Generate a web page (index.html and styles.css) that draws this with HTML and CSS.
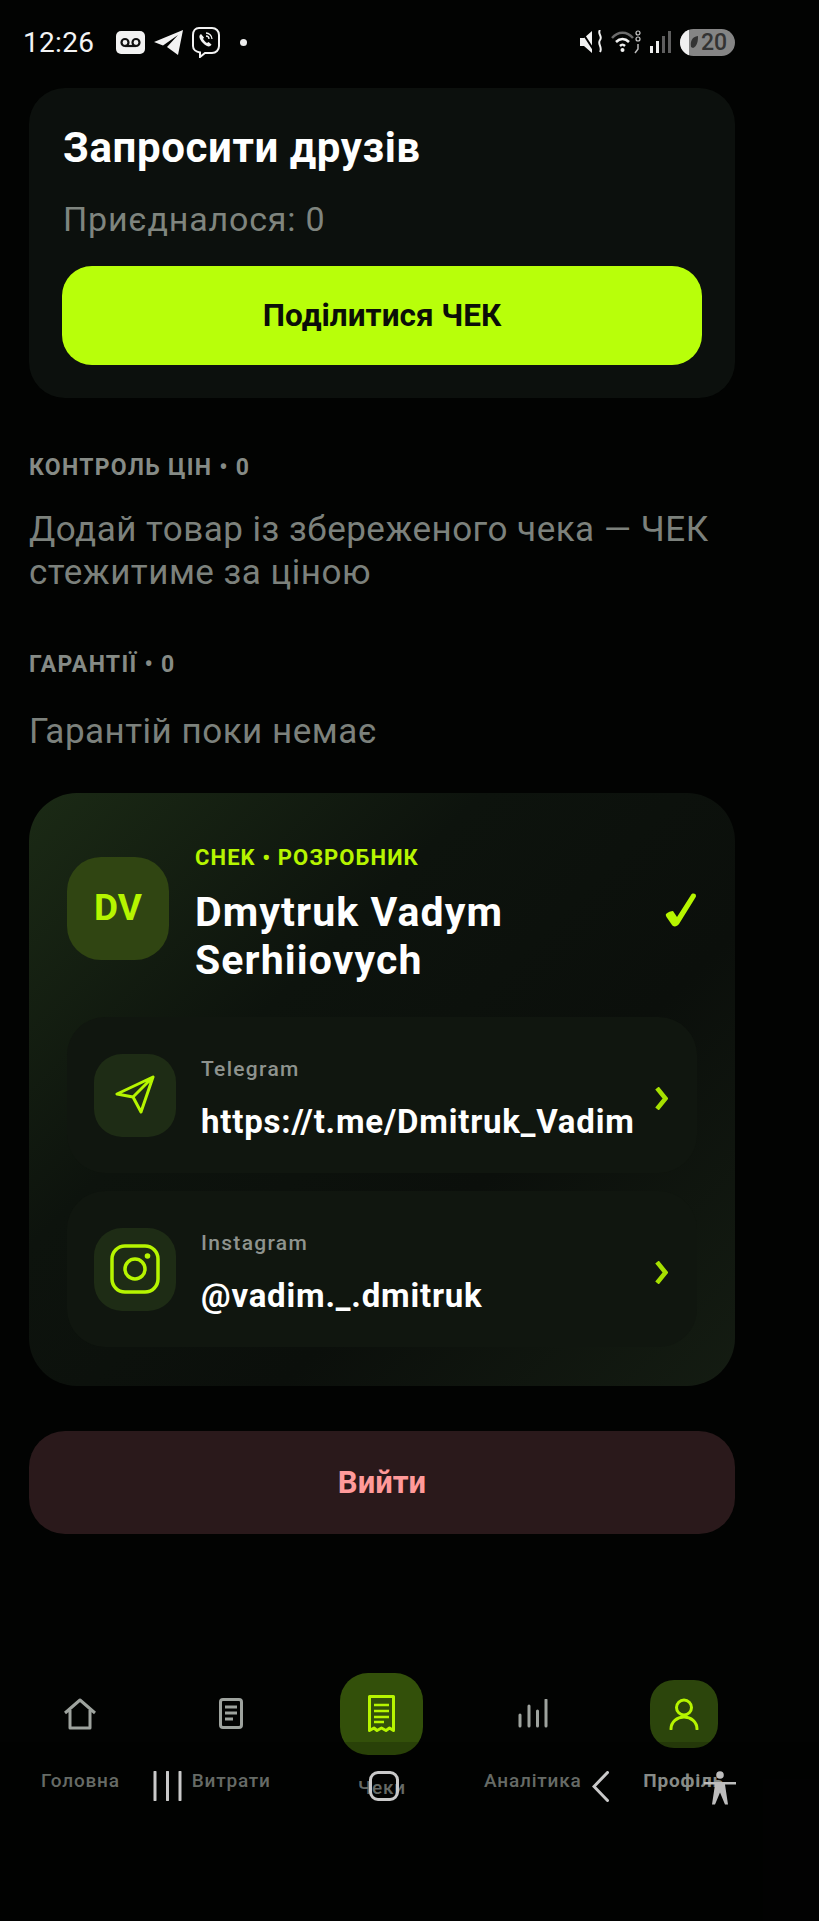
FILE: index.html
```html
<!DOCTYPE html>
<html lang="uk">
<head>
    <meta charset="UTF-8">
    <meta name="viewport" content="width=device-width, initial-scale=1.0">
    <title>Профіль</title>
    <link rel="stylesheet" href="styles.css">
</head>
<body>
    <header class="status-bar">
        <span class="clock">12:26</span>
        <svg class="st-voicemail" width="29" height="23" viewBox="0 0 29 23"><rect width="29" height="23" rx="5" fill="#f2f2f2"/><circle cx="9" cy="11.500" r="3.500" fill="none" stroke="#111" stroke-width="2.200"/><circle cx="20" cy="11.500" r="3.500" fill="none" stroke="#111" stroke-width="2.200"/><path d="M9 15h11" stroke="#111" stroke-width="2.200"/></svg>
        <svg class="st-telegram" width="29" height="25" viewBox="0 0 29 25"><path d="M29 0 0 12l9 3.500L24 5 13 17l11 8z" fill="#f2f2f2"/></svg>
        <svg class="st-viber" width="30" height="32" viewBox="0 0 30 32"><path d="M8 2h13c4 0 7 3 7 7v11c0 4-3 7-7 7h-7l-5 4v-4.500C5 26 2 23.500 2 20V9c0-4 2.500-7 6-7z" fill="none" stroke="#f2f2f2" stroke-width="2"/><path d="M10 8c-2 1-2 3-1 5 1.500 3 4 5.500 7 7 2 1 4 0 4.500-1.500l-3-2.500-1.500 1c-1.500-1-3-2.500-4-4l1-1.500z" fill="#f2f2f2"/><path d="M15 7c3 0 6 2.500 6 6M15 10c1.500 0 3 1.200 3 3" fill="none" stroke="#f2f2f2" stroke-width="1.300"/></svg>
        <span class="st-dot"></span>
        <span class="st-spacer"></span>
        <svg class="st-mute" width="25" height="24" viewBox="0 0 25 24"><path d="M0 8h4l8-7v22l-8-7H0z" fill="#f2f2f2"/><path d="M2 2l13 20" stroke="#000" stroke-width="2"/><path d="M20 0c-3 4 3 6 0 10s3 7 0 12" fill="none" stroke="#f2f2f2" stroke-width="2"/></svg>
        <svg class="st-wifi" width="32" height="26" viewBox="0 0 32 26"><path d="M1 9c6-7 15-7 21 0" fill="none" stroke="#6b6b6b" stroke-width="2.500"/><path d="M5 13c4-4 9-4 13 0M9 17c2-2 3-2 5 0" fill="none" stroke="#f2f2f2" stroke-width="2.500"/><circle cx="11.500" cy="21" r="2" fill="#f2f2f2"/><circle cx="27" cy="4" r="2" fill="none" stroke="#ccc" stroke-width="1.200"/><circle cx="27" cy="10" r="2" fill="none" stroke="#ccc" stroke-width="1.200"/><path d="M27 15v5l-3 4" fill="none" stroke="#bbb" stroke-width="1.500"/></svg>
        <svg class="st-signal" width="21" height="22" viewBox="0 0 21 22"><rect x="0" y="15" width="3" height="7" fill="#eee"/><rect x="6" y="10" width="3" height="12" fill="#eee"/><rect x="12" y="5" width="3" height="17" fill="#5e5e5e"/><rect x="18" y="0" width="3" height="22" fill="#5e5e5e"/></svg>
        <div class="battery">
            <span class="battery-fill"></span>
            <svg class="battery-leaf" width="8" height="12" viewBox="0 0 8 12"><path d="M8 0C2 1 0 5 1 11l2 1C7 10 8 6 8 0z" fill="#333"/></svg>
            <span class="battery-val">20</span>
        </div>
    </header>

    <main class="content">
        <section class="card invite">
            <h2 class="invite-title">Запросити друзів</h2>
            <p class="invite-sub">Приєдналося: 0</p>
            <button class="share-btn">Поділитися ЧЕК</button>
        </section>

        <h3 class="sec-title sec-prices">КОНТРОЛЬ ЦІН • 0</h3>
        <p class="sec-text">Додай товар із збереженого чека — ЧЕК стежитиме за ціною</p>

        <h3 class="sec-title sec-warranty">ГАРАНТІЇ • 0</h3>
        <p class="sec-text sec-text-low">Гарантій поки немає</p>

        <section class="dev-card">
            <div class="dev-head">
                <div class="avatar">DV</div>
                <div class="dev-info">
                    <div class="dev-tag">CHEK • РОЗРОБНИК</div>
                    <div class="dev-name">Dmytruk Vadym Serhiiovych</div>
                </div>
                <svg class="dev-check" width="32" height="35" viewBox="0 0 32 35"><path d="M1 21c2-2 5-3 7-3l4 6L26 2c1-2 5-2 5 1 0 1-1 2-1.500 3L14 31c-2 3-6 3-7 1L1.500 24c-.5-1-1-2-.5-3z" fill="#b6f500"/></svg>
            </div>
            <a class="link-row">
                <div class="link-icon">
                    <svg width="40" height="40" viewBox="0 0 40 40"><path d="M38 2 2 19l16 3 8 15zM18 22 38 2" fill="none" stroke="#b6f500" stroke-width="3" stroke-linejoin="round" stroke-linecap="round"/></svg>
                </div>
                <div class="link-text">
                    <div class="link-label">Telegram</div>
                    <div class="link-value">https://t.me/Dmitruk_Vadim</div>
                </div>
                <svg class="chev" width="13" height="23" viewBox="0 0 13 23"><path d="M2 1l8.500 10.500L2 22" fill="none" stroke="#a6e000" stroke-width="4.500"/></svg>
            </a>
            <a class="link-row">
                <div class="link-icon">
                    <svg width="50" height="50" viewBox="0 0 50 50"><rect x="2" y="2" width="46" height="46" rx="13" fill="none" stroke="#b6f500" stroke-width="3.500"/><circle cx="25" cy="25" r="10" fill="none" stroke="#b6f500" stroke-width="3.500"/><circle cx="37.500" cy="12" r="2.800" fill="#b6f500"/></svg>
                </div>
                <div class="link-text">
                    <div class="link-label">Instagram</div>
                    <div class="link-value">@vadim._.dmitruk</div>
                </div>
                <svg class="chev" width="13" height="23" viewBox="0 0 13 23"><path d="M2 1l8.500 10.500L2 22" fill="none" stroke="#a6e000" stroke-width="4.500"/></svg>
            </a>
        </section>

        <button class="logout-btn">Вийти</button>
    </main>

    <nav class="tabs">
        <div class="tab">
            <div class="tab-icon">
                <svg width="34" height="32" viewBox="0 0 34 32"><path d="M2 15 17 2l15 13M7 12v18h20V12" fill="none" stroke="#9ea39e" stroke-width="3" stroke-linejoin="round"/></svg>
            </div>
            <span class="tab-label">Головна</span>
        </div>
        <div class="tab">
            <div class="tab-icon">
                <svg width="24" height="31" viewBox="0 0 24 31"><rect x="1.500" y="1.500" width="21" height="28" rx="2.500" fill="none" stroke="#9ea39e" stroke-width="3"/><path d="M6 9h12M6 15h12M6 21h8" stroke="#9ea39e" stroke-width="3"/></svg>
            </div>
            <span class="tab-label">Витрати</span>
        </div>
        <div class="tab tab-main">
            <div class="tab-icon">
                <svg width="27" height="38" viewBox="0 0 27 38"><path d="M1.500 1.500h24v34l-4-2.500-3.500 2.500-4.500-2.500-4.500 2.500L6 33l-4.500 2.500z" fill="none" stroke="#b6f500" stroke-width="3" stroke-linejoin="round"/><path d="M6 10h15M6 16h15M6 22h15M6 27h10" stroke="#b6f500" stroke-width="2.600"/></svg>
            </div>
            <span class="tab-label">Чеки</span>
        </div>
        <div class="tab">
            <div class="tab-icon">
                <svg width="30" height="29" viewBox="0 0 30 29"><path d="M2 27V16M11 27V7M19.500 27V12M28 27V1" stroke="#9ea39e" stroke-width="3" stroke-linecap="round"/></svg>
            </div>
            <span class="tab-label">Аналітика</span>
        </div>
        <div class="tab tab-on">
            <div class="tab-icon">
                <svg width="30" height="32" viewBox="0 0 30 32"><circle cx="15" cy="9.500" r="7.500" fill="none" stroke="#b6f500" stroke-width="3"/><path d="M2 31c0-7 6-12 13-12s13 5 13 12" fill="none" stroke="#b6f500" stroke-width="3" stroke-linecap="round"/></svg>
            </div>
            <span class="tab-label">Профіль</span>
        </div>
    </nav>

    <!-- system navigation drawn over the app -->
    <div class="sys-nav">
        <svg class="sys-bars" width="29" height="30" viewBox="0 0 29 30"><path d="M2 1v28M14.500 1v28M27 1v28" stroke="#c9c9c9" stroke-width="3" stroke-linecap="round"/></svg>
        <span class="sys-home"></span>
        <svg class="sys-back" width="17" height="31" viewBox="0 0 17 31"><path d="M15.500 1.500 2 15.500l13.500 14" fill="none" stroke="#c9c9c9" stroke-width="3" stroke-linecap="round"/></svg>
        <svg class="sys-a11y" width="32" height="34" viewBox="0 0 32 34"><circle cx="16" cy="4" r="3.800" fill="#bdbdbd"/><path d="M0 11h32v2.500H21l3 20h-3l-5-12-5 12H8l3-20H0z" fill="#bdbdbd"/></svg>
    </div>
</body>
</html>
```

FILE: styles.css
```css
* {
    box-sizing: border-box;
}
body {
    margin: 0;
    width: 819px;
    height: 1921px;
    position: relative;
    overflow: hidden;
    display: flex;
    flex-direction: column;
    font-family: Roboto, "Liberation Sans", sans-serif;
    background-color: #020302;
    color: #fff;
}

/* status bar */
.status-bar {
    height: 88px;
    flex-shrink: 0;
    display: flex;
    align-items: center;
    padding: 0 84px 4px 23px;
}
.clock {
    font-size: 28px;
    letter-spacing: 0.3px;
    color: #f4f4f4;
    width: 93px;
}
.st-telegram {
    margin-left: 9px;
}
.st-viber {
    margin-left: 8px;
}
.st-dot {
    width: 7px;
    height: 7px;
    border-radius: 50%;
    background-color: #eee;
    margin-left: 19px;
}
.st-spacer {
    flex: 1;
}
.st-wifi {
    margin-left: 6px;
}
.st-signal {
    margin-left: 7px;
}
.battery {
    margin-left: 9px;
    width: 55px;
    height: 27px;
    border-radius: 14px;
    background-color: #858585;
    overflow: hidden;
    display: flex;
    align-items: center;
    padding-right: 5px;
}
.battery-fill {
    width: 9px;
    height: 27px;
    background-color: #f0f0f0;
}
.battery-leaf {
    margin-left: 1px;
}
.battery-val {
    margin-left: 3px;
    font-size: 23px;
    font-weight: 500;
    color: #333;
}

/* page content */
.content {
    flex: 1;
    width: 764px;
    padding: 0 29px;
}
.card {
    background-color: #0c100d;
    border-radius: 36px;
}
.invite {
    height: 310px;
    padding: 35px 33px 33px;
}
.invite-title {
    margin: 0;
    padding-left: 1px;
    font-size: 42px;
    line-height: 50px;
    font-weight: 700;
    letter-spacing: 0.6px;
}
.invite-sub {
    margin: 0;
    padding: 0 0 0 1px;
    height: 93px;
    font-size: 34px;
    line-height: 92px;
    letter-spacing: 0.8px;
    color: #7f857f;
}
.share-btn {
    display: block;
    width: 100%;
    height: 99px;
    border: none;
    border-radius: 30px;
    background-color: #b8ff0a;
    color: #0b0e08;
    font-family: inherit;
    font-size: 31.500px;
    font-weight: 700;
}
.sec-title {
    margin: 0;
    font-size: 23px;
    line-height: 26px;
    font-weight: 700;
    letter-spacing: 1.3px;
    color: #868b86;
}
.sec-prices {
    margin-top: 57px;
}
.sec-warranty {
    margin-top: 58px;
}
.sec-text {
    margin: 27px 0 0;
    font-size: 35px;
    line-height: 43px;
    letter-spacing: 0.5px;
    color: #7c817c;
}
.sec-text-low {
    margin-top: 32px;
}

/* developer card */
.dev-card {
    margin-top: 40px;
    height: 593px;
    padding: 52px 38px 0;
    border-radius: 48px;
    background: linear-gradient(135deg, #1b2a15 0%, #0d130d 35%, #0b0f0b 65%, #141c12 100%);
}
.dev-head {
    display: flex;
    align-items: flex-start;
    height: 172px;
}
.avatar {
    width: 102px;
    height: 103px;
    margin-top: 12px;
    flex-shrink: 0;
    border-radius: 34px;
    background-color: #304512;
    color: #b6f500;
    font-size: 37px;
    font-weight: 700;
    display: flex;
    align-items: center;
    justify-content: center;
    padding-bottom: 2px;
}
.dev-info {
    margin-left: 26px;
    width: 400px;
}
.dev-tag {
    font-size: 22px;
    line-height: 26px;
    font-weight: 700;
    letter-spacing: 1.1px;
    color: #b6f500;
}
.dev-name {
    margin-top: 17px;
    font-size: 41px;
    line-height: 48px;
    font-weight: 700;
    letter-spacing: 1.1px;
}
.dev-check {
    margin: 48px 0 0 70px;
}
.link-row {
    height: 156px;
    margin-bottom: 18px;
    padding: 0 29px 0 27px;
    border-radius: 38px;
    background-color: #10160f;
    display: flex;
    align-items: center;
}
.link-icon {
    width: 82px;
    height: 83px;
    flex-shrink: 0;
    border-radius: 28px;
    background-color: #1e2c15;
    display: flex;
    align-items: center;
    justify-content: center;
}
.link-text {
    flex: 1;
    margin-left: 25px;
    padding-top: 8px;
}
.link-label {
    font-size: 21px;
    line-height: 26px;
    font-weight: 500;
    letter-spacing: 1.3px;
    color: #8e938e;
}
.link-value {
    margin-top: 20px;
    font-size: 33px;
    line-height: 40px;
    font-weight: 700;
    letter-spacing: 0.8px;
}
.chev {
    margin-top: 6px;
}
.logout-btn {
    display: block;
    width: 100%;
    height: 103px;
    margin-top: 45px;
    border: none;
    border-radius: 36px;
    background-color: #2a191b;
    color: #ff9a9a;
    font-family: inherit;
    font-size: 31px;
    font-weight: 700;
}

/* bottom tabs */
.tabs {
    width: 764px;
    height: 249px;
    flex-shrink: 0;
    padding: 0 5px 122px;
    display: grid;
    grid-template-columns: repeat(5, 1fr);
    align-items: center;
}
.tab {
    display: flex;
    flex-direction: column;
    align-items: center;
}
.tab-icon {
    width: 68px;
    height: 68px;
    border-radius: 24px;
    display: flex;
    align-items: center;
    justify-content: center;
}
.tab-label {
    margin-top: 22px;
    font-size: 19px;
    line-height: 22px;
    font-weight: 500;
    letter-spacing: 0.8px;
    white-space: nowrap;
    color: #7d827d;
}
.tab-main .tab-icon {
    width: 83px;
    height: 82px;
    border-radius: 28px;
    background-color: #33500a;
}
.tab-on .tab-icon {
    background-color: #2c450c;
}
.tab-on .tab-label {
    font-weight: 700;
    color: #a5aaa5;
}

/* system nav over the page */
.sys-nav {
    position: absolute;
    left: 0;
    right: 0;
    top: 1742px;
    bottom: 0;
    background-color: rgba(0, 0, 0, 0.18);
    display: flex;
    align-items: flex-start;
    padding: 29px 0 0 153px;
}
.sys-home {
    width: 30px;
    height: 30px;
    margin-left: 187px;
    border: 3px solid #c9c9c9;
    border-radius: 9px;
}
.sys-back {
    margin-left: 193px;
}
.sys-a11y {
    margin-left: 95px;
}
```
